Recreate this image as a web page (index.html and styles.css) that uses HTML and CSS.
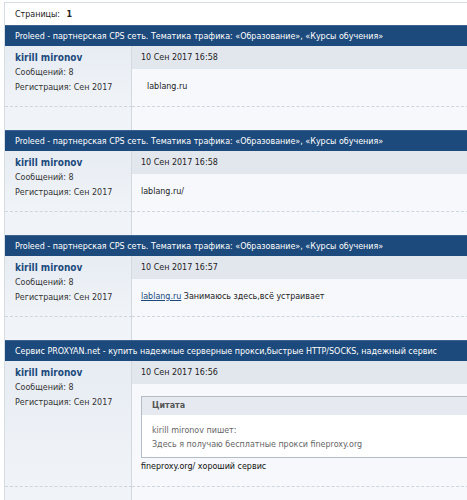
FILE: index.html
```html
<!DOCTYPE html>
<html lang="ru">
<head>
<meta charset="UTF-8" />
<title>Proleed - партнерская CPS сеть</title>
<link rel="stylesheet" href="styles.css">
</head>
<body>

<div class="forum">
    <!-- PAGER -->
    <div class="pager">Страницы: <b>1</b></div>

    <!-- POST 1 -->
    <div class="thread-title">Proleed - партнерская CPS сеть. Тематика трафика: «Образование», «Курсы обучения»</div>
    <div class="post">
        <div class="author">
            <a class="name">kirill mironov</a>
            <span>Сообщений: 8</span>
            <span>Регистрация: Сен 2017</span>
        </div>
        <div class="content">
            <div class="date">10 Сен 2017 16:58</div>
            <div class="message indent">lablang.ru</div>
        </div>
        <div class="foot-left"></div>
        <div class="foot-right"></div>
    </div>

    <!-- POST 2 -->
    <div class="thread-title">Proleed - партнерская CPS сеть. Тематика трафика: «Образование», «Курсы обучения»</div>
    <div class="post">
        <div class="author">
            <a class="name">kirill mironov</a>
            <span>Сообщений: 8</span>
            <span>Регистрация: Сен 2017</span>
        </div>
        <div class="content">
            <div class="date">10 Сен 2017 16:58</div>
            <div class="message">lablang.ru/</div>
        </div>
        <div class="foot-left"></div>
        <div class="foot-right"></div>
    </div>

    <!-- POST 3 -->
    <div class="thread-title">Proleed - партнерская CPS сеть. Тематика трафика: «Образование», «Курсы обучения»</div>
    <div class="post">
        <div class="author">
            <a class="name">kirill mironov</a>
            <span>Сообщений: 8</span>
            <span>Регистрация: Сен 2017</span>
        </div>
        <div class="content">
            <div class="date">10 Сен 2017 16:57</div>
            <div class="message"><a class="link">lablang.ru</a> Занимаюсь здесь,всё устраивает</div>
        </div>
        <div class="foot-left"></div>
        <div class="foot-right"></div>
    </div>

    <!-- POST 4 -->
    <div class="thread-title">Сервис PROXYAN.net - купить надежные серверные прокси,быстрые HTTP/SOCKS, надежный сервис</div>
    <div class="post">
        <div class="author">
            <a class="name">kirill mironov</a>
            <span>Сообщений: 8</span>
            <span>Регистрация: Сен 2017</span>
        </div>
        <div class="content">
            <div class="date">10 Сен 2017 16:56</div>
            <div class="quote">
                <div class="quote-head">Цитата</div>
                <div class="quote-body">
                    kirill mironov пишет:<br>
                    Здесь я получаю бесплатные прокси fineproxy.org
                </div>
            </div>
            <div class="after-quote">fineproxy.org/ хороший сервис</div>
        </div>
        <div class="foot-left"></div>
        <div class="foot-right"></div>
    </div>
</div>

</body>
</html>
```

FILE: styles.css
```css
* { margin: 0; padding: 0; box-sizing: border-box; }

body {
    background: #fff;
    font-family: 'DejaVu Sans Condensed', 'DejaVu Sans', sans-serif;
    font-size: 8.9px;
    color: #333;
    padding: 2px 0 0 4px;
    overflow: hidden;
}

.forum {
    width: 520px;
    border-left: 1px solid #d6dce4;
    border-top: 1px solid #d6dce4;
}

.pager {
    height: 22px;
    line-height: 22px;
    padding-left: 10px;
    color: #222;
}
.pager b { margin-left: 4px; }

.thread-title {
    height: 21px;
    line-height: 21px;
    padding-left: 10px;
    background: #1c4a7c;
    border-top: 1px solid #3c6290;
    color: #fff;
    white-space: nowrap;
}

.post {
    display: grid;
    grid-template-columns: 127px 1fr;
}

.author {
    display: flex;
    flex-direction: column;
    padding: 4px 0 0 10px;
    background: linear-gradient(#e7ecf3, #f0f4f8);
    border-right: 1px solid #d3d9e1;
    line-height: 14.5px;
    white-space: nowrap;
}

.name {
    color: #1c4a7c;
    font-weight: bold;
    font-size: 10px;
    line-height: 15px;
}

.content {
    background: #f6f8fb;
    padding-bottom: 13px;
}

.date {
    height: 23px;
    line-height: 22px;
    padding-left: 9px;
    background: #e2e7ee;
    color: #222;
}

.message {
    padding: 10px 0 0 9px;
    line-height: 14px;
    color: #222;
}
.message.indent { padding-left: 15px; }

.link {
    color: #1c4a7c;
    text-decoration: underline;
}

.quote {
    margin: 12px 0 0 9px;
    border: 1px solid #b4bcc6;
    background: #fff;
}

.quote-head {
    height: 18px;
    line-height: 17px;
    padding-left: 10px;
    background: #e6eaf0;
    font-weight: bold;
    color: #555;
}

.quote-body {
    padding: 8px 0 6px 10px;
    line-height: 14px;
    color: #666;
}

.after-quote {
    padding: 1px 0 0 9px;
    line-height: 14px;
    color: #111;
}

.foot-left,
.foot-right {
    height: 24px;
    border-top: 1px dashed #cfd5dd;
}
.foot-left {
    background: #f0f4f8;
    border-right: 1px solid #d3d9e1;
}
.foot-right { background: #f6f8fb; }
```
